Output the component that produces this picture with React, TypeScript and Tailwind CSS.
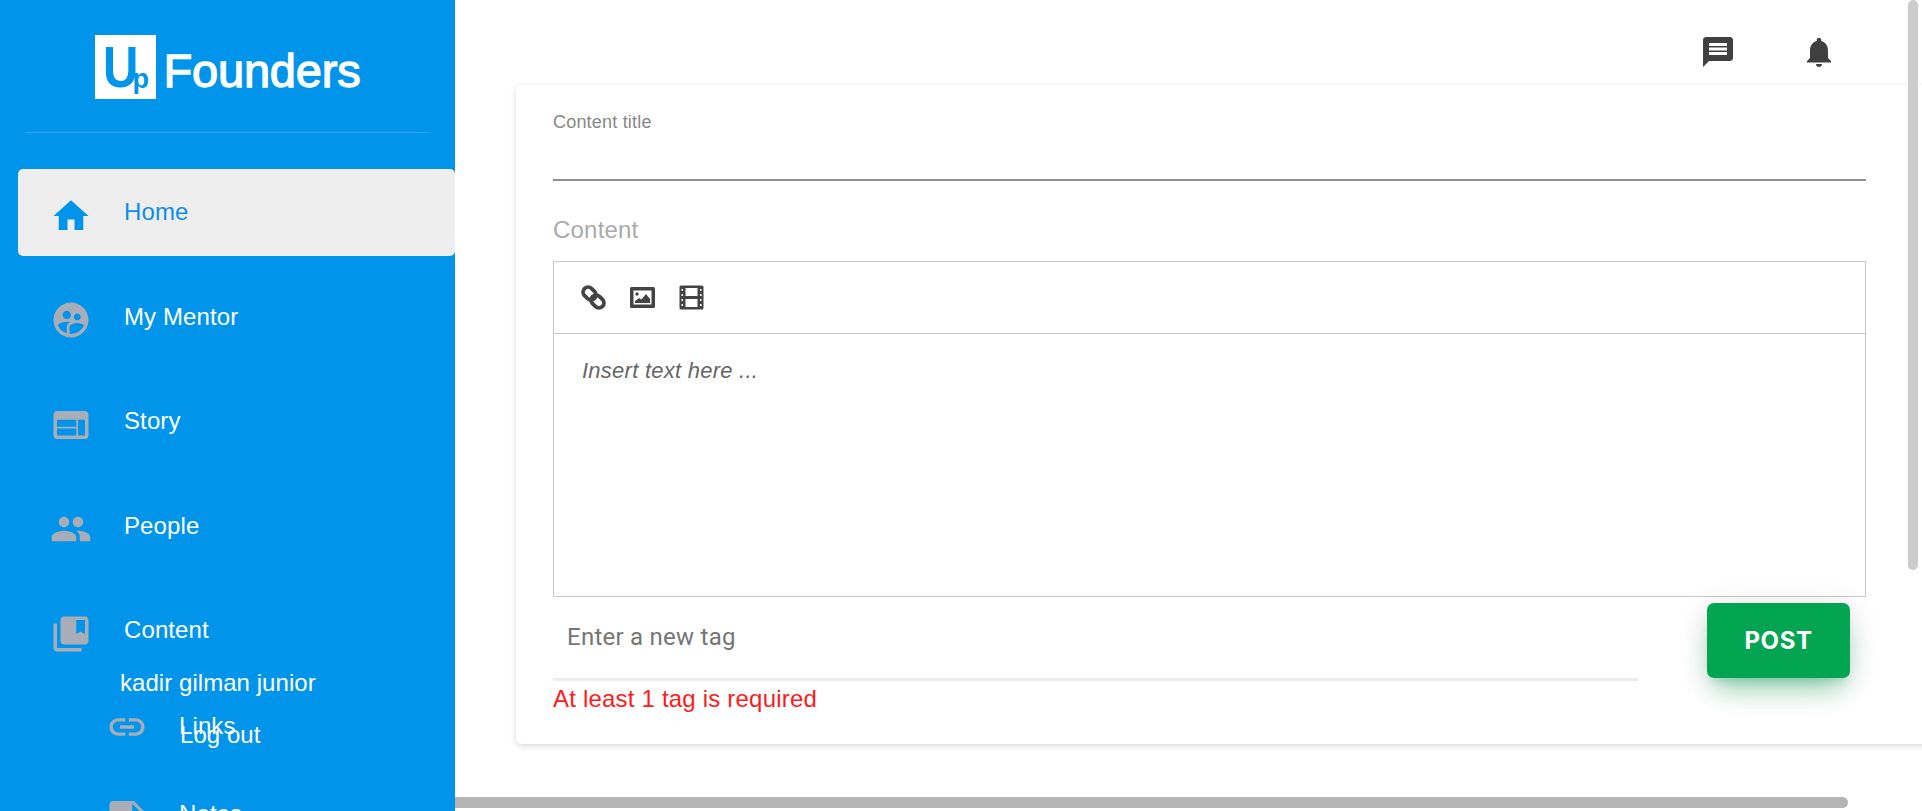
import { MdHome, MdSupervisedUserCircle, MdWeb, MdPeople, MdCollectionsBookmark, MdLink, MdNote, MdMessage, MdNotifications } from 'react-icons/md';

const navItems = [
  { label: 'Home', icon: MdHome, active: true },
  { label: 'My Mentor', icon: MdSupervisedUserCircle },
  { label: 'Story', icon: MdWeb },
  { label: 'People', icon: MdPeople },
  { label: 'Content', icon: MdCollectionsBookmark },
];

const subItems = [
  { label: 'Links', icon: MdLink },
  { label: 'Notes', icon: MdNote },
];

function LinkIcon() {
  return (
    <svg width="25" height="25" viewBox="0 0 25 25" fill="none" stroke="#444444" strokeWidth="3.8">
      <rect x="1.5" y="3.5" width="14" height="10" rx="5" transform="rotate(45 8.5 8.5)" />
      <rect x="9.5" y="11.5" width="14" height="10" rx="5" transform="rotate(45 16.5 16.5)" />
    </svg>
  );
}

function ImageIcon() {
  return (
    <svg width="25" height="25" viewBox="0 0 25 25">
      <rect x="0" y="2" width="25" height="21" rx="1.5" fill="#444444" />
      <rect x="3.5" y="5.5" width="18" height="14" fill="#ffffff" />
      <circle cx="7" cy="9" r="1.7" fill="#444444" />
      <path d="M5 18v-2l4-3 2.5 1.5L16 9l4 5v4z" fill="#444444" />
    </svg>
  );
}

function FilmIcon() {
  return (
    <svg width="25" height="25" viewBox="0 0 25 25">
      <rect x="0.5" y="0.5" width="24" height="24" rx="1.5" fill="#444444" />
      <rect x="6.5" y="3" width="12" height="8" fill="#ffffff" />
      <rect x="6.5" y="14" width="12" height="8" fill="#ffffff" />
      <path d="M2.5 4h1.5v2H2.5zM2.5 9h1.5v2H2.5zM2.5 14h1.5v2H2.5zM2.5 19h1.5v2H2.5zM21 4h1.5v2H21zM21 9h1.5v2H21zM21 14h1.5v2H21zM21 19h1.5v2H21z" fill="#ffffff" />
    </svg>
  );
}

function Sidebar() {
  return (
    <aside className="relative w-[455px] shrink-0 h-full overflow-hidden bg-[#0095eb] text-white">
      {/* Logo */}
      <div className="mx-[26px] h-[133px] flex justify-center border-b border-white/20 pt-[35px]">
        <div className="flex items-start">
          <div className="w-[61px] h-[64px] bg-white text-[#0095eb] font-bold flex items-start overflow-hidden pl-[8px]">
            <span className="w-[31px] text-[57px] leading-[64px] scale-x-[0.86] origin-left">U</span>
            <span className="mt-[26px] text-[27px] leading-[36px] origin-left -ml-[1px]">p</span>
          </div>
          <span className="ml-[8px] mt-[9px] text-[47px] leading-[54px] font-normal tracking-[-0.2px] [-webkit-text-stroke:1.3px_white]">Founders</span>
        </div>
      </div>

      {/* Menu */}
      <nav className="mt-[36px] ml-[18px] flex flex-col gap-[17.5px]">
        {navItems.map((item) => (
          <a
            key={item.label}
            className={`h-[87px] flex items-center pl-[32px] gap-[32px] rounded-[5px] text-[24px] tracking-[0.1px] ${
              item.active ? 'bg-[#eeeeee] text-[#0f8ee9]' : 'text-white'
            }`}
          >
            <item.icon size={42} className={`mt-[6px] shrink-0 ${item.active ? 'text-[#0095eb]' : 'text-[#a9adb8]'}`} />
            <span className="-mt-[1px]">{item.label}</span>
          </a>
        ))}
      </nav>
      <div className="ml-[106px] mt-[20px] flex flex-col gap-[24px]">
        {subItems.map((item) => (
          <a key={item.label} className="h-[64px] flex items-center gap-[31px] text-[24px] tracking-[0.1px]">
            <item.icon size={42} className="mt-[2px] shrink-0 text-[#a9adb8]" />
            {item.label}
          </a>
        ))}
      </div>

      {/* User box lying over the menu */}
      <div className="absolute left-[120px] top-[666px] text-[24px] leading-[34px] tracking-[0.05px]">
        <div>kadir gilman junior</div>
        <div className="ml-[60px] mt-[18px]">Log out</div>
      </div>
    </aside>
  );
}

function Editor() {
  return (
    <div className="w-[1313px] h-[336px] border border-[#c8c8c8]">
      <div className="h-[72px] border-b border-[#c8c8c8] flex items-center pl-[27px] gap-[24px]">
        <LinkIcon />
        <ImageIcon />
        <FilmIcon />
      </div>
      <div className="pl-[28px] pt-[21px] text-[22px] leading-[32px] tracking-[0.25px] italic text-[#666666]">Insert text here ...</div>
    </div>
  );
}

export default function App() {
  return (
    <div className="relative w-full h-screen flex overflow-hidden bg-white font-['Liberation_Sans',Arial,sans-serif]">
      <Sidebar />

      <main className="flex-1 min-w-0 overflow-hidden">
        {/* Top bar */}
        <div className="h-[85px] flex items-start pt-[34px] pl-[1245px] gap-[65px] text-[#404040]">
          <MdMessage size={36} className="shrink-0" />
          <MdNotifications size={36} className="shrink-0" />
        </div>

        {/* Card */}
        <div className="ml-[61px] w-[1500px] h-[659px] bg-white rounded-[6px] shadow-[0_2px_6px_rgba(0,0,0,0.16)] pl-[37px] pt-[27px]">
          <div className="w-[1313px] h-[69px] border-b-2 border-[#8f8f8f] text-[18px] leading-[20px] tracking-[0.2px] text-[#888888]">Content title</div>
          <div className="mt-[33px] mb-[15px] text-[24px] leading-[32px] tracking-[0.2px] text-[#aaaaaa]">Content</div>
          <Editor />

          <div className="w-[1313px] flex items-start">
            <div className="w-[1085px] shrink-0">
              <div className="h-[84px] pb-[2px] border-b-[3px] border-[#eeeeee] flex items-center pl-[14px] font-['Roboto',sans-serif] text-[24px] tracking-[0.25px] text-[#757575]">
                Enter a new tag
              </div>
              <div className="text-[24px] leading-[36px] tracking-[0.2px] text-[#ff1a1a]">At least 1 tag is required</div>
            </div>
            <button className="ml-[69px] mt-[6px] w-[143px] h-[75px] rounded-[7px] bg-[#04a552] text-white text-[24px] font-bold tracking-[0.6px] font-['Inter',sans-serif] shadow-[0_18px_30px_-10px_rgba(4,165,82,0.45),0_4px_30px_0_rgba(0,0,0,0.12),0_8px_10px_-5px_rgba(4,165,82,0.2)]">
              POST
            </button>
          </div>
        </div>
      </main>

      {/* Scrollbars */}
      <div className="absolute left-[1908px] top-0 w-[10px] h-[570px] rounded-full bg-[#cccccc]" />
      <div className="absolute left-[455px] top-[797px] w-[1393px] h-[11px] rounded-r-full bg-[#b5b5b5]" />
    </div>
  );
}
